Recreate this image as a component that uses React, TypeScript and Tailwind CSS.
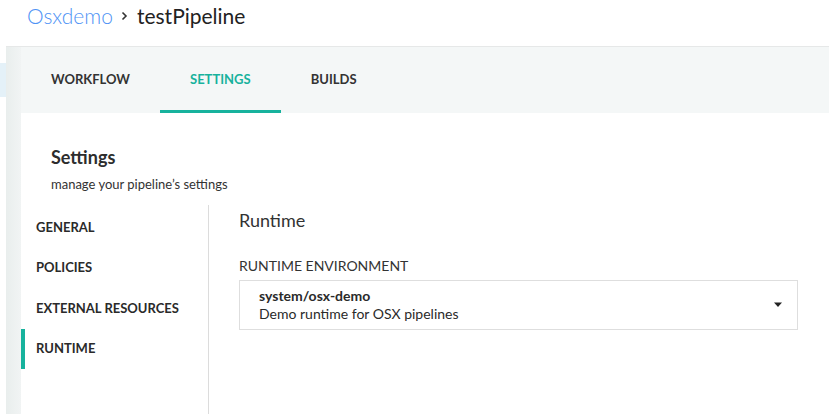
import React from "react";

const NAV = ["GENERAL", "POLICIES", "EXTERNAL RESOURCES", "RUNTIME"];

export default function App() {
  return (
    <div
      className="relative flex h-[414px] w-[829px] overflow-hidden bg-white text-[#333]"
      style={{ fontFamily: "Lato, 'Noto Sans', sans-serif" }}
    >
      {/* left app sidebar edge */}
      <div className="flex w-[6px] flex-col bg-white">
        <div className="mt-[63px] h-[34px] bg-[#e4f1f8]" />
      </div>
      <div className="flex min-w-0 flex-1 flex-col">
        {/* header */}
        <div className="flex h-[47px] items-start border-b border-[#e6e8e8] bg-white pl-[21px] pt-[2px]">
          <span className="text-[21px] font-light leading-[28px] text-[#4f93f5]">Osxdemo</span>
          <svg className="ml-[8px] mr-[9px] mt-[9px]" width="7" height="10" viewBox="0 0 7 10">
            <path d="M1.5 1.5 L5 5 L1.5 8.5" fill="none" stroke="#333" strokeWidth="1.6" />
          </svg>
          <span className="text-[21px] leading-[28px] text-[#222]">testPipeline</span>
        </div>
        <div className="flex flex-1 bg-[#f4f7f7]">
          {/* shadow strip */}
          <div className="w-[15px] bg-gradient-to-r from-[#e9eeed] to-[#f1f4f4]" />
          <div className="flex min-w-0 flex-1 flex-col">
            {/* tabs */}
            <div className="flex h-[66px] items-stretch">
              {["WORKFLOW", "SETTINGS", "BUILDS"].map((t) => (
                <div
                  key={t}
                  className={
                    "flex items-center border-b-[3px] px-[30px] pt-[3px] text-[13px] font-bold " +
                    (t === "SETTINGS"
                      ? "border-[#17b29d] text-[#17b29d]"
                      : "border-transparent text-[#333]")
                  }
                >
                  {t}
                </div>
              ))}
            </div>
            {/* card */}
            <div className="flex flex-1 flex-col bg-white">
              <div className="pl-[30px] pt-[33px]">
                <div className="text-[18px] font-bold leading-[22px] text-[#2d2d2d]">Settings</div>
                <div className="mt-[8px] text-[13px] leading-[16px] text-[#333]">
                  manage your pipeline’s settings
                </div>
              </div>
              <div className="mt-[13px] flex flex-1">
                <div className="flex w-[187px] flex-col pt-[2px]">
                  {NAV.map((n) => (
                    <div
                      key={n}
                      className={
                        "flex h-[40.5px] items-center border-l-[4px] pl-[11px] text-[13px] font-bold text-[#2a2a2a] " +
                        (n === "RUNTIME" ? "border-[#17b29d]" : "border-transparent")
                      }
                    >
                      {n}
                    </div>
                  ))}
                </div>
                <div className="w-px bg-[#dcdcdc]" />
                <div className="flex-1 pl-[30px] pr-[31px]">
                  <div className="mt-[4px] text-[18px] leading-[22px] text-[#333]">Runtime</div>
                  <div className="mt-[26px] text-[14px] leading-[18px] text-[#333]">RUNTIME ENVIRONMENT</div>
                  <div className="mt-[5px] flex h-[50px] items-center justify-between border border-[#dedede] pl-[19px] pr-[15px]">
                    <div className="flex flex-col">
                      <span className="text-[14px] font-bold leading-[18px] text-[#2a2a2a]">system/osx-demo</span>
                      <span className="text-[14px] leading-[18px] text-[#2a2a2a]">Demo runtime for OSX pipelines</span>
                    </div>
                    <svg width="8" height="6" viewBox="0 0 8 6">
                      <path d="M0 0.5 L8 0.5 L4 5 Z" fill="#222" />
                    </svg>
                  </div>
                </div>
              </div>
            </div>
          </div>
        </div>
      </div>
    </div>
  );
}
